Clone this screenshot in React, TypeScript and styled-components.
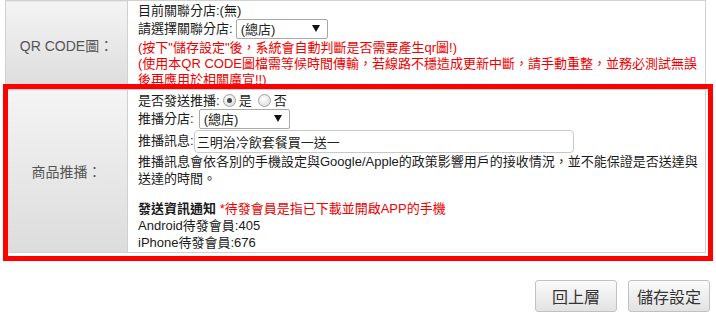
import styled, { createGlobalStyle } from 'styled-components'

const GlobalStyle = createGlobalStyle`
  body {
    margin: 0;
    background: #ffffff;
    font-family: "Liberation Sans", "Noto Sans CJK TC", Arial, sans-serif;
    font-size: 13px;
    color: #222;
  }
`

const Page = styled.div`
  position: relative;
  width: 716px;
  height: 331px;
  padding-left: 5px;
  box-sizing: border-box;
`

const FormTable = styled.table`
  width: 701px;
  border-collapse: collapse;
  border: 1px solid #d0d0d0;
`

const LabelCell = styled.th`
  width: 121px;
  padding: 0;
  border: 1px solid #d0d0d0;
  background: linear-gradient(#f4f4f4, #dcdcdc);
  color: #555;
  font-weight: normal;
  font-size: 14px;
  text-align: center;
  vertical-align: middle;
`

const ContentCell = styled.td<{ $pt?: number }>`
  padding: ${(p) => p.$pt ?? 1}px 5px 1px 10px;
  border: 1px solid #d0d0d0;
  vertical-align: top;
`

const Line = styled.div<{ $h?: number; $red?: boolean }>`
  line-height: ${(p) => p.$h ?? 17}px;
  height: ${(p) => p.$h ?? 17}px;
  white-space: nowrap;
  color: ${(p) => (p.$red ? '#ee0000' : '#1a1a1a')};
`

const Para = styled.div`
  line-height: 17px;
  color: #1a1a1a;
`

const FieldRow = styled.div<{ $h: number }>`
  display: flex;
  align-items: flex-start;
  height: ${(p) => p.$h}px;
  line-height: 20px;
  color: #1a1a1a;
`

const SelectWrap = styled.span<{ $ml?: number }>`
  position: relative;
  display: inline-block;
  margin-left: ${(p) => p.$ml ?? 0}px;
`

const Select = styled.select<{ $w?: number }>`
  appearance: none;
  width: ${(p) => p.$w ?? 92}px;
  height: 20px;
  margin: 0;
  padding: 0 0 0 4px;
  border: 1px solid #a9a9a9;
  border-radius: 2px;
  background: #fff;
  font-family: inherit;
  font-size: 13px;
  color: #222;
`

const Arrow = styled.span`
  position: absolute;
  right: 8px;
  top: 6px;
  width: 0;
  height: 0;
  border-left: 4px solid transparent;
  border-right: 4px solid transparent;
  border-top: 7px solid #111;
  pointer-events: none;
`

const TextInput = styled.input`
  width: 380px;
  height: 23px;
  box-sizing: border-box;
  margin: 1px 0 0 0;
  padding: 0 2px;
  border: 1px solid #c8c8c8;
  border-radius: 4px;
  font-family: inherit;
  font-size: 13px;
  color: #222;
  outline: none;
`

const RadioGroup = styled.span`
  display: inline-flex;
  align-items: center;
  gap: 3px;
  margin-left: 3px;
  line-height: 17px;
`

const Radio = styled.span<{ $checked?: boolean }>`
  position: relative;
  display: inline-block;
  width: 11px;
  height: 11px;
  border: 1px solid #a0a0a0;
  border-radius: 50%;
  background: radial-gradient(circle at 40% 35%, #ffffff, #d6d6d6);
  margin-left: ${(p) => (p.$checked ? 0 : 3)}px;
  &::after {
    content: '';
    display: ${(p) => (p.$checked ? 'block' : 'none')};
    position: absolute;
    left: 3px;
    top: 3px;
    width: 5px;
    height: 5px;
    border-radius: 50%;
    background: #444;
  }
`

const FieldLabel = styled.span<{ $lh: number }>`
  line-height: ${(p) => p.$lh}px;
`

const NoticeTitle = styled.span`
  font-weight: bold;
  color: #1a1a1a;
`

const Red = styled.span`
  color: #ee0000;
`

const ButtonBar = styled.div`
  display: flex;
  justify-content: flex-end;
  gap: 11px;
  margin-top: 27px;
  padding-right: 6px;
`

const Button = styled.button`
  width: 82px;
  height: 32px;
  border: 1px solid #c2c2c2;
  border-radius: 3px;
  background: linear-gradient(#fbfbfb, #e2e2e2);
  font-family: "Liberation Sans", "Noto Sans CJK TC", sans-serif;
  font-size: 16px;
  color: #333;
  padding: 0;
`

const Highlight = styled.div`
  position: absolute;
  left: 3px;
  top: 84px;
  width: 710px;
  height: 177px;
  box-sizing: border-box;
  border: 5px solid #ff0000;
  pointer-events: none;
`

export default function App() {
  return (
    <>
      <GlobalStyle />
      <Page>
        <FormTable>
          <tbody>
            <tr>
              <LabelCell>QR CODE圖：</LabelCell>
              <ContentCell>
                <Line>目前關聯分店:(無)</Line>
                <FieldRow $h={21}>
                  請選擇關聯分店:
                  <SelectWrap $ml={3}>
                    <Select defaultValue="0">
                      <option value="0">(總店)</option>
                    </Select>
                    <Arrow />
                  </SelectWrap>
                </FieldRow>
                <Line $h={16} $red>(按下"儲存設定"後，系統會自動判斷是否需要產生qr圖!)</Line>
                <Line $h={16} $red>
                  (使用本QR CODE圖檔需等候時間傳輸，若線路不穩造成更新中斷，請手動重整，並務必測試無誤
                </Line>
                <Line $h={16} $red>後再應用於相關廣宣!!)</Line>
              </ContentCell>
            </tr>
            <tr>
              <LabelCell>商品推播：</LabelCell>
              <ContentCell $pt={2}>
                <FieldRow $h={17}>
                  <FieldLabel $lh={17}>是否發送推播:</FieldLabel>
                  <RadioGroup>
                    <Radio $checked />
                    是
                    <Radio />
                    否
                  </RadioGroup>
                </FieldRow>
                <FieldRow $h={20}>
                  推播分店:
                  <SelectWrap $ml={5}>
                    <Select defaultValue="0" $w={91}>
                      <option value="0">(總店)</option>
                    </Select>
                    <Arrow />
                  </SelectWrap>
                </FieldRow>
                <FieldRow $h={24}>
                  <FieldLabel $lh={24}>推播訊息:</FieldLabel>
                  <TextInput defaultValue="三明治冷飲套餐買一送一" />
                </FieldRow>
                <Para>
                  推播訊息會依各別的手機設定與Google/Apple的政策影響用戶的接收情況，並不能保證是否送達與
                  <br />
                  送達的時間。
                </Para>
                <Line style={{ marginTop: 13 }}>
                  <NoticeTitle>發送資訊通知</NoticeTitle> <Red>*待發會員是指已下載並開啟APP的手機</Red>
                </Line>
                <Line>Android待發會員:405</Line>
                <Line>iPhone待發會員:676</Line>
              </ContentCell>
            </tr>
          </tbody>
        </FormTable>
        <ButtonBar>
          <Button>回上層</Button>
          <Button>儲存設定</Button>
        </ButtonBar>
        <Highlight />
      </Page>
    </>
  )
}
